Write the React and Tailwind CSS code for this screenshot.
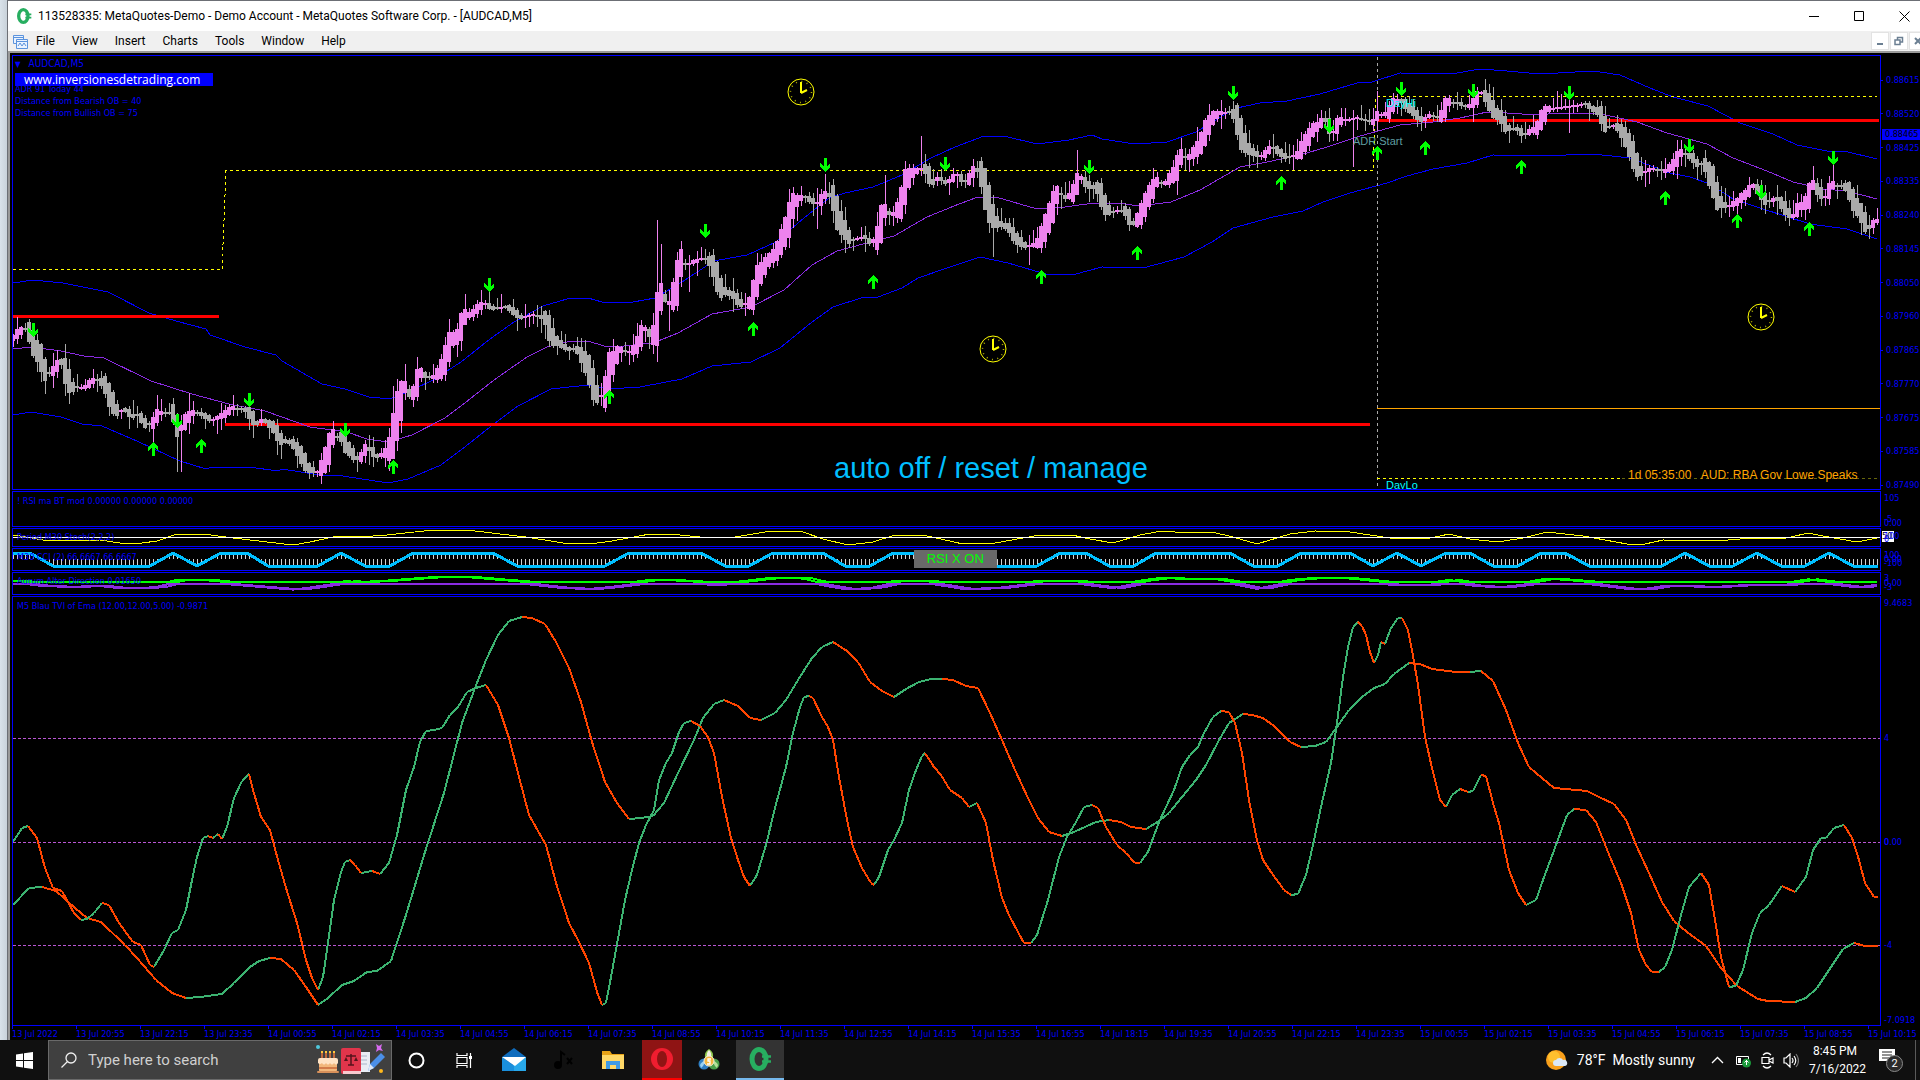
import React from "react";

// ================= PRICE CHART DATA =================
const PRICE = [
  [13, 338], [18, 333], [24, 328], [29, 332], [33, 343], [41, 358], [46, 373], [51, 373], [61, 362], [67, 375],
  [71, 387], [84, 388], [96, 379], [104, 383], [110, 397], [118, 412], [124, 409], [133, 416], [139, 415], [147, 425],
  [153, 423], [159, 413], [175, 413], [178, 433], [184, 423], [192, 413], [200, 413], [212, 420], [222, 416], [233, 408],
  [247, 410], [257, 423], [264, 420], [273, 427], [282, 440], [292, 443], [300, 453], [308, 467], [318, 472], [322, 467],
  [327, 455], [333, 437], [341, 437], [347, 447], [359, 460], [367, 447], [378, 457], [386, 452], [392, 445], [394, 427],
  [402, 397], [405, 387], [410, 394], [414, 393], [420, 373], [431, 378], [439, 373], [445, 360], [451, 340], [457, 337],
  [465, 317], [473, 313], [484, 303], [494, 308], [508, 307], [522, 318], [535, 315], [545, 318], [553, 337], [559, 343],
  [569, 349], [578, 350], [588, 367], [594, 387], [599, 398], [605, 392], [608, 375], [614, 360], [620, 350], [631, 352],
  [639, 342], [644, 328], [651, 335], [656, 335], [658, 303], [662, 295], [669, 303], [676, 290], [680, 263], [688, 264],
  [704, 258], [712, 263], [718, 280], [722, 290], [733, 295], [743, 305], [751, 302], [758, 278], [767, 262], [776, 253],
  [786, 230], [794, 203], [804, 196], [818, 204], [827, 193], [833, 198], [838, 217], [845, 230], [851, 240], [865, 237],
  [871, 243], [878, 237], [884, 210], [892, 215], [900, 207], [906, 183], [912, 173], [924, 167], [933, 182], [939, 178],
  [947, 183], [957, 175], [967, 182], [975, 168], [982, 175], [986, 193], [992, 215], [998, 223], [1008, 227], [1018, 240],
  [1027, 247], [1039, 242], [1047, 223], [1053, 207], [1058, 192], [1067, 198], [1073, 193], [1080, 177], [1090, 186],
  [1098, 188], [1106, 207], [1112, 212], [1124, 210], [1133, 223], [1139, 218], [1147, 200], [1157, 182], [1165, 183],
  [1176, 172], [1180, 157], [1190, 157], [1200, 145], [1207, 128], [1213, 118], [1220, 113], [1232, 112], [1237, 120],
  [1242, 138], [1250, 150], [1262, 157], [1272, 147], [1280, 152], [1287, 157], [1298, 155], [1305, 143], [1313, 130],
  [1325, 120], [1333, 132], [1340, 121], [1353, 119], [1358, 118], [1373, 122], [1378, 115], [1388, 114], [1393, 105],
  [1400, 100], [1408, 107], [1417, 115], [1423, 121], [1430, 115], [1440, 118], [1448, 102], [1458, 103], [1467, 107],
  [1473, 103], [1482, 92], [1488, 100], [1495, 113], [1502, 118], [1507, 128], [1517, 129], [1525, 134], [1537, 128],
  [1542, 118], [1548, 109], [1570, 107], [1585, 104], [1600, 113], [1607, 128], [1615, 125], [1623, 133], [1630, 147],
  [1637, 165], [1642, 173], [1653, 169], [1665, 171], [1673, 165], [1682, 152], [1692, 157], [1697, 163], [1705, 165],
  [1713, 182], [1718, 200], [1727, 207], [1737, 202], [1748, 192], [1754, 185], [1760, 192], [1767, 202], [1777, 199],
  [1783, 205], [1792, 217], [1798, 208], [1807, 202], [1813, 185], [1825, 197], [1833, 185], [1847, 187], [1853, 200],
  [1862, 215], [1868, 228], [1877, 221],
];

// long wicks: bar x -> [high, low]
const SPIKES = {
  177: [413, 472], 181: [415, 472], 189: [393, 434], 281: [430, 459], 393: [386, 450], 405: [364, 400], 465: [294, 325],
  657: [220, 362], 661: [244, 315], 669: [290, 331], 689: [255, 292], 817: [188, 229], 825: [174, 204], 885: [175, 226],
  921: [136, 176], 985: [170, 205], 993: [195, 257], 1029: [235, 265], 1077: [150, 190], 1353: [110, 167], 1377: [91, 130],
  1569: [96, 133], 1557: [91, 112], 1813: [166, 190], 1833: [163, 190], 1861: [205, 235], 1869: [215, 239],
};

const UPPER = [
  [13, 283], [33, 280], [63, 283], [108, 292], [149, 313], [176, 321], [206, 329], [210, 335], [245, 347], [276, 355],
  [282, 361], [322, 384], [345, 389], [369, 397], [390, 399], [412, 390], [433, 380], [461, 362], [490, 339], [514, 322],
  [543, 306], [567, 299], [588, 298], [602, 302], [633, 302], [655, 298], [682, 282], [714, 261], [747, 255], [776, 242],
  [804, 218], [829, 198], [845, 193], [873, 187], [902, 175], [931, 158], [955, 147], [984, 136], [1008, 137], [1037, 144],
  [1069, 140], [1092, 135], [1102, 139], [1135, 144], [1167, 142], [1196, 132], [1224, 115], [1237, 108], [1260, 103],
  [1287, 101], [1320, 94], [1357, 83], [1372, 82], [1400, 73], [1440, 74], [1457, 73], [1480, 69], [1507, 71], [1540, 74],
  [1593, 71], [1620, 75], [1650, 88], [1673, 97], [1708, 106], [1740, 123], [1773, 134], [1797, 145], [1827, 151],
  [1848, 152], [1877, 159],
];

const MIDDLE = [
  [13, 349], [31, 347], [61, 351], [84, 356], [104, 358], [151, 381], [192, 394], [229, 404], [265, 411], [310, 427],
  [347, 432], [367, 439], [388, 442], [412, 435], [445, 418], [461, 406], [494, 380], [527, 357], [547, 347], [571, 341],
  [588, 341], [604, 346], [624, 346], [653, 343], [678, 333], [712, 314], [751, 307], [784, 290], [812, 265], [837, 251],
  [878, 240], [894, 236], [927, 217], [959, 204], [978, 197], [996, 197], [1037, 209], [1065, 207], [1094, 203], [1118, 203],
  [1139, 206], [1171, 202], [1200, 190], [1240, 167], [1267, 162], [1300, 155], [1327, 147], [1360, 136], [1400, 125],
  [1433, 122], [1460, 118], [1487, 112], [1507, 113], [1537, 115], [1560, 113], [1597, 113], [1637, 122], [1667, 133],
  [1707, 144], [1733, 158], [1767, 171], [1793, 182], [1823, 189], [1847, 191], [1877, 199],
];

const LOWER = [
  [13, 415], [31, 412], [61, 417], [82, 424], [102, 426], [139, 442], [180, 461], [206, 469], [212, 467], [249, 467],
  [278, 471], [282, 469], [320, 475], [343, 476], [388, 483], [408, 479], [441, 465], [461, 450], [490, 427], [518, 406],
  [551, 389], [588, 385], [608, 389], [640, 387], [682, 379], [712, 366], [751, 362], [780, 348], [812, 322], [833, 307],
  [861, 298], [878, 297], [902, 288], [918, 278], [947, 268], [980, 257], [1008, 263], [1049, 275], [1076, 274], [1102, 267],
  [1143, 268], [1184, 257], [1212, 242], [1233, 228], [1273, 217], [1303, 211], [1323, 202], [1350, 193], [1387, 183],
  [1407, 176], [1433, 169], [1467, 163], [1493, 155], [1540, 156], [1593, 154], [1630, 158], [1670, 173], [1690, 177],
  [1710, 184], [1733, 199], [1763, 209], [1810, 224], [1847, 229], [1877, 239],
];

const SELLS = [
  [33, 330], [177, 421], [249, 400], [345, 430], [489, 285], [705, 231], [825, 165], [945, 164], [1089, 167],
  [1233, 93], [1329, 126], [1401, 89], [1473, 91], [1569, 93], [1689, 146], [1761, 192], [1833, 158],
];
const BUYS = [
  [153, 449], [201, 446], [393, 467], [609, 397], [753, 329], [873, 282], [1041, 277], [1137, 253], [1281, 183],
  [1377, 153], [1425, 148], [1521, 167], [1665, 198], [1737, 221], [1809, 229],
];
const CLOCKS = [[801, 92], [993, 349], [1761, 317]];

// ================= INDICATOR DATA =================
const STOCH = [
  [13, 535], [20, 536], [43, 540], [67, 541], [100, 540], [120, 543], [142, 543], [157, 541], [177, 534], [203, 534],
  [233, 538], [267, 542], [293, 545], [310, 542], [333, 537], [347, 536], [360, 537], [387, 535], [433, 530], [467, 530],
  [500, 534], [526, 537], [563, 543], [590, 544], [612, 541], [650, 534], [680, 535], [710, 538], [735, 537], [765, 532],
  [780, 531], [803, 532], [823, 539], [848, 545], [873, 542], [895, 535], [923, 535], [963, 544], [995, 543], [1040, 535],
  [1072, 535], [1090, 539], [1113, 543], [1140, 535], [1162, 531], [1188, 533], [1212, 532], [1233, 537], [1257, 544],
  [1290, 534], [1315, 531], [1350, 532], [1390, 538], [1425, 539], [1440, 536], [1449, 534], [1470, 539], [1498, 542],
  [1523, 538], [1547, 532], [1583, 536], [1627, 544], [1645, 544], [1663, 540], [1717, 541], [1740, 539], [1787, 538],
  [1808, 533], [1823, 536], [1857, 542], [1877, 538],
];

const HI = 553;
const LO = 566;
const CCI = [
  [13, HI], [30, HI], [53, LO], [150, LO], [173, HI], [197, LO], [221, HI], [247, HI], [268, LO], [318, LO], [341, HI],
  [365, LO], [390, LO], [413, HI], [493, HI], [517, LO], [605, LO], [629, HI], [701, HI], [725, LO], [749, LO],
  [773, HI], [823, HI], [845, LO], [870, LO], [893, HI], [914, HI], [938, LO], [1037, LO], [1060, HI], [1086, HI],
  [1109, LO], [1134, LO], [1156, HI], [1230, HI], [1253, LO], [1278, LO], [1301, HI], [1350, HI], [1373, LO],
  [1397, HI], [1421, LO], [1446, HI], [1470, HI], [1493, LO], [1518, LO], [1541, HI], [1565, HI], [1589, LO],
  [1662, LO], [1685, HI], [1709, LO], [1733, LO], [1757, HI], [1781, LO], [1805, LO], [1829, HI], [1853, LO], [1878, LO],
];

const FAST = [
  [13, 842], [22, 828], [28, 826], [37, 838], [45, 868], [53, 888], [62, 891], [74, 913], [81, 920], [87, 919], [94, 913],
  [102, 903], [109, 905], [119, 923], [133, 942], [141, 945], [150, 965], [154, 967], [164, 950], [172, 933], [178, 930],
  [186, 910], [192, 880], [197, 857], [203, 838], [208, 836], [213, 838], [218, 834], [222, 839], [227, 827], [234, 798],
  [242, 781], [249, 774], [253, 790], [261, 817], [270, 830], [278, 860], [286, 888], [297, 923], [306, 960], [312, 978],
  [318, 990], [323, 977], [328, 943], [334, 900], [341, 872], [345, 862], [350, 860], [355, 865], [361, 873], [372, 871],
  [380, 874], [389, 863], [397, 835], [406, 790], [414, 767], [420, 742], [426, 731], [434, 730], [442, 728], [450, 715],
  [458, 707], [467, 692], [476, 688], [486, 685], [498, 705], [509, 738], [519, 777], [529, 815], [546, 845], [556, 883],
  [569, 923], [578, 940], [589, 963], [597, 992], [602, 1005], [606, 1003], [611, 977], [619, 933], [625, 900], [632, 870],
  [639, 843], [646, 825], [654, 810], [659, 780], [666, 763], [672, 753], [679, 732], [684, 723], [691, 721], [700, 726],
  [708, 737], [714, 753], [722, 797], [731, 838], [738, 860], [744, 877], [750, 886], [757, 875], [766, 845], [775, 808],
  [786, 767], [793, 733], [800, 707], [804, 697], [809, 696], [813, 698], [822, 717], [828, 727], [833, 740], [839, 777],
  [847, 820], [853, 847], [862, 868], [871, 883], [874, 885], [879, 877], [888, 850], [894, 840], [902, 823], [909, 790],
  [916, 770], [922, 756], [925, 753], [934, 767], [941, 775], [950, 790], [962, 798], [969, 807], [977, 803], [986, 823],
  [993, 860], [1002, 898], [1009, 915], [1018, 932], [1024, 943], [1031, 943], [1037, 935], [1048, 900], [1059, 857],
  [1067, 837], [1076, 822], [1084, 807], [1092, 805], [1098, 808], [1106, 827], [1117, 845], [1126, 853], [1135, 863],
  [1140, 863], [1148, 852], [1159, 822], [1174, 790], [1182, 767], [1190, 755], [1198, 747], [1204, 733], [1213, 717],
  [1221, 711], [1229, 712], [1235, 723], [1242, 753], [1249, 800], [1257, 840], [1263, 860], [1271, 872], [1284, 890],
  [1291, 895], [1298, 894], [1306, 875], [1313, 845], [1321, 807], [1331, 763], [1337, 723], [1343, 677], [1348, 647],
  [1353, 627], [1358, 622], [1362, 626], [1366, 635], [1370, 652], [1374, 663], [1378, 655], [1381, 642], [1385, 644],
  [1391, 628], [1398, 618], [1402, 618], [1408, 630], [1412, 650], [1418, 685], [1425, 737], [1432, 768], [1440, 800],
  [1446, 807], [1452, 795], [1460, 789], [1468, 792], [1473, 791], [1481, 775], [1486, 776], [1493, 803], [1499, 823],
  [1509, 870], [1518, 893], [1526, 905], [1536, 900], [1543, 880], [1556, 845], [1567, 815], [1574, 809], [1586, 810],
  [1596, 822], [1602, 837], [1610, 857], [1621, 883], [1631, 913], [1639, 950], [1646, 965], [1652, 972], [1659, 972],
  [1665, 967], [1672, 950], [1681, 915], [1689, 887], [1701, 873], [1709, 885], [1715, 920], [1721, 957], [1729, 987],
  [1736, 986], [1743, 970], [1752, 933], [1760, 913], [1769, 905], [1782, 886], [1795, 892], [1806, 877], [1813, 850],
  [1821, 838], [1826, 838], [1834, 828], [1844, 825], [1852, 838], [1859, 860], [1865, 883], [1874, 897], [1878, 897],
];

const SLOW = [
  [13, 905], [29, 888], [42, 887], [56, 891], [75, 908], [87, 918], [101, 922], [125, 945], [137, 958], [156, 980],
  [172, 993], [186, 998], [200, 997], [222, 994], [234, 983], [250, 967], [259, 961], [270, 958], [281, 959], [294, 970],
  [306, 987], [318, 1005], [328, 998], [342, 985], [354, 981], [367, 972], [377, 971], [391, 961], [406, 915], [425, 852],
  [444, 793], [462, 723], [475, 688], [486, 660], [498, 635], [509, 621], [522, 617], [532, 618], [545, 624], [556, 642],
  [569, 668], [581, 702], [592, 742], [605, 782], [617, 803], [629, 819], [641, 818], [653, 816], [664, 803], [678, 773],
  [694, 740], [703, 718], [714, 704], [724, 700], [738, 706], [750, 718], [761, 720], [775, 713], [786, 700], [798, 680],
  [812, 658], [822, 647], [833, 642], [847, 651], [858, 662], [870, 682], [882, 691], [894, 697], [906, 689], [919, 682],
  [931, 679], [942, 679], [953, 680], [966, 686], [978, 688], [990, 713], [1002, 740], [1015, 770], [1028, 798],
  [1038, 818], [1049, 832], [1062, 836], [1074, 832], [1096, 822], [1109, 820], [1121, 822], [1131, 827], [1146, 829],
  [1159, 821], [1169, 813], [1182, 797], [1196, 780], [1206, 765], [1218, 742], [1229, 723], [1243, 714], [1252, 715],
  [1263, 718], [1274, 726], [1290, 742], [1301, 747], [1315, 746], [1326, 742], [1337, 727], [1349, 710], [1362, 697],
  [1374, 688], [1385, 684], [1394, 674], [1409, 663], [1420, 664], [1432, 669], [1456, 672], [1470, 672], [1481, 671],
  [1493, 681], [1506, 710], [1518, 743], [1529, 767], [1542, 778], [1554, 788], [1587, 791], [1599, 797], [1614, 804],
  [1626, 820], [1637, 847], [1649, 873], [1662, 902], [1674, 921], [1687, 932], [1706, 946], [1721, 968], [1737, 986],
  [1758, 999], [1768, 1001], [1795, 1002], [1806, 998], [1817, 988], [1831, 967], [1843, 949], [1854, 943], [1865, 946],
  [1878, 946],
];

const PRICES = [
  "0.88615", "0.88520", "0.88425", "0.88335", "0.88240", "0.88145", "0.88050",
  "0.87960", "0.87865", "0.87770", "0.87675", "0.87585", "0.87490",
];

// ================= HELPERS =================
const line = (pts) => pts.map(([x, y]) => `${x},${y}`).join(" ");

const valueAt = (pts, x) => {
  if (x <= pts[0][0]) return pts[0][1];
  for (let i = 1; i < pts.length; i++) {
    const [x0, y0] = pts[i - 1];
    const [x1, y1] = pts[i];
    if (x <= x1) return y0 + ((y1 - y0) * (x - x0)) / (x1 - x0);
  }
  return pts[pts.length - 1][1];
};

const noise = (n) => {
  const v = Math.sin(n * 12.9898) * 43758.5453;
  return v - Math.floor(v);
};

const BARS = Array.from({ length: 467 }, (_, i) => 13 + i * 4);

const buildCandles = () => {
  const out = { up: "", down: "" };
  BARS.forEach((x, i) => {
    const mid = valueAt(PRICE, x);
    const slope = (valueAt(PRICE, x + 4) - valueAt(PRICE, x - 4)) / 2;
    const half = Math.max(1, Math.round(Math.abs(slope) * 1.4));
    const y = Math.round(mid);
    let high = y - half - 1 - Math.round(noise(i) ** 2 * 13);
    let low = y + half + 1 + Math.round(noise(i + 500) ** 2 * 13);
    if (SPIKES[x]) [high, low] = SPIKES[x];
    const d = `M${x - 2} ${y - half}h4v${half * 2}h-4zM${x} ${high}h1v${low - high}h-1z`;
    if (slope < 0) out.up += d;
    else out.down += d;
  });
  return out;
};

// splits a curve into rising and falling strokes
const buildSlopes = (pts) => {
  const out = { up: "", down: "" };
  let dir = "up";
  for (let i = 1; i < pts.length; i++) {
    const [x0, y0] = pts[i - 1];
    const [x1, y1] = pts[i];
    if (y1 < y0) dir = "up";
    if (y1 > y0) dir = "down";
    out[dir] += `M${x0} ${y0}L${x1} ${y1}`;
  }
  return out;
};

const candles = buildCandles();
const cciTicks = BARS.map((x) => `M${x} 559h1V${Math.round(valueAt(CCI, x))}h-1z`).join("");

const aurum = (sign, lag) =>
  BARS.map((x) => {
    const v = (537 - valueAt(STOCH, x - lag)) * 0.7;
    return sign > 0 ? [x, 582 - Math.max(0, v)] : [x, 584 + Math.max(0, -v)];
  });

const timeLabels = Array.from({ length: 30 }, (_, i) => {
  if (i === 0) return "13 Jul 2022";
  const t = 20 * 60 + 55 + (i - 1) * 80;
  const day = 13 + Math.floor(t / 1440);
  const hh = String(Math.floor((t % 1440) / 60)).padStart(2, "0");
  const mm = String(t % 60).padStart(2, "0");
  return `${day} Jul ${hh}:${mm}`;
});

// ================= CHART PARTS =================
const X0 = 13;
const WIDTH = 1867;

const Panel = ({ top, height, className, axis, labels, children }) => (
  <section className={`flex ${className}`}>
    <div className="relative flex min-w-0 flex-1 overflow-hidden border border-[#0000ff]">
      <svg
        className="block w-full"
        viewBox={`${X0} ${top} ${WIDTH} ${height}`}
        preserveAspectRatio="none"
        shapeRendering="crispEdges"
        fill="none"
      >
        {children}
      </svg>
      {labels}
    </div>
    <div className="relative w-[39px] shrink-0">{axis}</div>
  </section>
);

const Pin = ({ x, y, top, height, className, children }) => (
  <span
    className={`absolute -translate-y-1/2 whitespace-pre ${className}`}
    style={{ left: `${((x - X0) / WIDTH) * 100}%`, top: `${((y - top) / height) * 100}%` }}
  >
    {children}
  </span>
);

const Slopes = ({ pts }) => {
  const s = buildSlopes(pts);
  return (
    <>
      <path d={s.up} stroke="#3cb371" strokeWidth="2" />
      <path d={s.down} stroke="#ff4500" strokeWidth="2" />
    </>
  );
};

const Arrow = ({ x, y, up }) => (
  <path
    transform={`translate(${x} ${y}) scale(1 ${up ? -1 : 1})`}
    d="M-1 -7H2V1L5 -2V2L1 7H0L-5 2V-2L-1 1Z"
    fill="#00ff00"
  />
);

const Clock = ({ x, y }) => (
  <g transform={`translate(${x} ${y})`} stroke="#ffff00" shapeRendering="auto">
    <circle r="13" />
    <circle r="10.500" strokeDasharray="1 4.500" strokeWidth="1.500" opacity="0.700" />
    <path d="M0 1V-10M0 1L6 -2" strokeWidth="2" />
  </g>
);

const PriceChart = () => (
  <Panel
    top={56}
    height={433}
    className="h-[435px]"
    labels={
      <>
        <div className="absolute top-[2px] left-[2px] flex flex-col items-start leading-3">
          <span className="text-[10px]">
            <span className="mr-2 text-[8px]">▼</span>AUDCAD,M5
          </span>
          <span className="relative z-10 mt-[2px] h-[13px] w-[198px] bg-[#0000ff] pl-[9px] font-['Open_Sans',sans-serif] text-[12px] leading-[13px] text-white">
            www.inversionesdetrading.com
          </span>
          <span className="-mt-[3px]">ADR 91  Today 44</span>
          <span>Distance from Bearish OB = 40</span>
          <span>Distance from Bullish OB = 75</span>
        </div>
        <Pin x={1386} y={103} top={56} height={433} className="font-['Liberation_Sans',sans-serif] text-[11px] text-[#00ffff]">DayHi</Pin>
        <Pin x={1353} y={141} top={56} height={433} className="font-['Liberation_Sans',sans-serif] text-[11px] text-[#5f9ea0]">ADR Start</Pin>
        <Pin x={1386} y={485} top={56} height={433} className="font-['Liberation_Sans',sans-serif] text-[11px] text-[#00ffff]">DayLo</Pin>
        <Pin x={834} y={468} top={56} height={433} className="font-['Liberation_Sans',sans-serif] text-[29px] text-[#00bfff]">auto off / reset / manage</Pin>
        <Pin x={1628} y={475} top={56} height={433} className="font-['Liberation_Sans',sans-serif] text-[12px] text-[#ffa500]">1d 05:35:00   AUD: RBA Gov Lowe Speaks</Pin>
      </>
    }
    axis={
      <>
        <ul className="flex h-[434px] flex-col justify-between pt-[21px] leading-[8px]">
          {PRICES.map((p) => (
            <li key={p} className="flex items-center gap-[3px]">
              <i className="h-px w-[2px] bg-[#0000ff]" />
              {p}
            </li>
          ))}
        </ul>
        <span className="absolute top-[74px] left-px w-[38px] bg-[#0000ff] pl-[3px] leading-[11px] text-black">0.88465</span>
      </>
    }
  >
    <polyline points={line(UPPER)} stroke="#0000ff" />
    <polyline points={line(LOWER)} stroke="#0000ff" />
    <path d="M13 316.500H219M225 424.500H1370M1377 120.500H1879" stroke="#ff0000" strokeWidth="3" />
    <path d="M13 269.500H222L226 170.500H1373L1376 96.500H1877" stroke="#ffff00" strokeDasharray="3 3" />
    <path d="M1377.500 57V489" stroke="#a9a9a9" strokeDasharray="3 3" />
    <path d="M1377 408.500H1880" stroke="#ffa500" />
    <path d="M1377 478.500H1622" stroke="#ffff00" strokeDasharray="3 3" />
    <path d="M1622 478.500H1877" stroke="#66660a" strokeDasharray="3 3" />
    <polyline points={line(MIDDLE)} stroke="#8a2be2" />
    <path d={candles.down} fill="#a9a9a9" />
    <path d={candles.up} fill="#ee82ee" />
    {SELLS.map(([x, y]) => <Arrow key={x} x={x} y={y} />)}
    {BUYS.map(([x, y]) => <Arrow key={x} x={x} y={y} up />)}
    {CLOCKS.map(([x, y]) => <Clock key={x} x={x} y={y} />)}
  </Panel>
);

const BLAU_LEVELS = [["4", 738], ["0", 842], ["0.00", 842], ["-4", 945]];

const Indicators = () => (
  <>
    <Panel
      top={492}
      height={34}
      className="h-[36px]"
      labels={<span className="absolute top-[3px] left-[4px]">! RSI ma BT mod 0.00000 0.00000 0.00000</span>}
      axis={
        <>
          <span className="absolute top-px left-[3px]">105</span>
          <span className="absolute top-[22px] left-[3px]">-5</span>
          <span className="absolute top-[26px] left-[3px] h-[9px] overflow-hidden">0.00</span>
        </>
      }
    />
    <Panel
      top={529}
      height={17}
      className="h-[19px]"
      labels={<span className="absolute top-[2px] left-[4px]">Period M30 Stoch(2,2,2)</span>}
      axis={
        <>
          <span className="absolute top-[3px] left-px w-3 bg-white leading-[11px] text-black">50</span>
          <span className="absolute top-[2px] left-[3px]">100</span>
          <span className="absolute top-[5px] left-[3px]">0</span>
        </>
      }
    >
      <polyline points={line(STOCH)} stroke="#ffff00" />
      <path d="M13 537.500H1880" stroke="#ffffff" />
    </Panel>
    <Panel
      top={549}
      height={21}
      className="h-[23px]"
      labels={
        <>
          <span className="absolute top-[2px] left-[4px]">M30 CCI (2) 66.6667 66.6667</span>
          <button className="absolute top-px left-[48.25%] h-[18px] w-[83px] bg-[#696969] font-['Liberation_Sans',sans-serif] text-[13px] leading-[18px] text-[#00ff00]">
            RSI X ON
          </button>
        </>
      }
      axis={
        <>
          <span className="absolute top-px left-[3px]">100</span>
          <span className="absolute top-[5px] left-[3px]">0.00</span>
          <span className="absolute top-[9px] left-[3px]">-100</span>
        </>
      }
    >
      <path d={cciTicks} fill="#d3d3d3" />
      <polyline points={line(CCI)} stroke="#00bfff" strokeWidth="3" />
    </Panel>
    <Panel
      top={573}
      height={21}
      className="h-[23px]"
      labels={<span className="absolute top-[2px] left-[4px]">Aurum Alter Direction 0.01650</span>}
      axis={
        <>
          <span className="absolute top-0 left-[3px]">3</span>
          <span className="absolute top-[5px] left-[3px]">0.00</span>
          <span className="absolute top-[9px] left-[3px]">-3</span>
        </>
      }
    >
      <polyline points={line(aurum(-1, 0))} stroke="#8a2be2" strokeWidth="2" />
      <polyline points={line(aurum(-1, 10))} stroke="#8a2be2" strokeWidth="2" />
      <polyline points={line(aurum(1, 0))} stroke="#00ff00" strokeWidth="2" />
      <polyline points={line(aurum(1, 10))} stroke="#00ff00" strokeWidth="2" />
    </Panel>
    <Panel
      top={597}
      height={428}
      className="min-h-[430px] flex-1"
      labels={<span className="absolute top-[3px] left-[4px]">M5 Blau TVI of Ema (12.00,12.00,5.00) -0.9871</span>}
      axis={
        <>
          <div className="flex h-full flex-col justify-between pt-px pl-[3px] leading-3">
            <span>9.4683</span>
            <span>-7.0918</span>
          </div>
          {BLAU_LEVELS.map(([text, y]) => (
            <span
              key={text}
              className="absolute left-[3px] -translate-y-1/2"
              style={{ top: `${((y - 596) / 430) * 100}%` }}
            >
              {text}
            </span>
          ))}
        </>
      }
    >
      <path d="M13 738.500H1880M13 842.500H1880M13 945.500H1880" stroke="#ba55d3" strokeDasharray="3 2" />
      <Slopes pts={SLOW} />
      <Slopes pts={FAST} />
    </Panel>
  </>
);

// ================= WINDOW CHROME =================
const TerminalLogo = ({ className }) => (
  <svg className={className} viewBox="0 0 24 24" fill="none">
    <ellipse cx="11" cy="12" rx="7" ry="9.500" stroke="#27ae60" strokeWidth="5" />
    <path d="M14 9.500h9M14 14.500h9" stroke="#27ae60" strokeWidth="2.500" />
  </svg>
);

const TitleBar = () => (
  <header className="flex h-[30px] items-center bg-white text-black">
    <TerminalLogo className="ml-2 size-4" />
    <h1 className="ml-[6px] flex-1 text-[12px]">
      113528335: MetaQuotes-Demo - Demo Account - MetaQuotes Software Corp. - [AUDCAD,M5]
    </h1>
    <div className="flex w-[129px] shrink-0 items-center gap-[34px] pl-[18px]">
      <button aria-label="Minimize">
        <svg className="size-[11px]" viewBox="0 0 11 11"><path d="M0 5.500h10" stroke="#000" /></svg>
      </button>
      <button aria-label="Maximize">
        <svg className="size-[11px]" viewBox="0 0 11 11"><path d="M.5.500h9v9h-9z" fill="none" stroke="#000" /></svg>
      </button>
      <button aria-label="Close">
        <svg className="size-[11px]" viewBox="0 0 11 11"><path d="M.5.500l10 10M10.500.500l-10 10" stroke="#000" /></svg>
      </button>
    </div>
  </header>
);

const MenuBar = () => (
  <nav className="flex h-[20px] items-center overflow-hidden bg-[#f0f0f0] text-[12px] text-black">
    <svg className="mr-2 ml-[5px] size-[15px] shrink-0" viewBox="0 0 15 15" fill="#eaf3ff" stroke="#5b93dd">
      <path d="M.5 1.500h10v8h-10zM.5 3.500h10" />
      <path d="M3.500 5.500h11v9h-11zM3.500 7.500h11" />
      <path d="M5 12l2-3 2 3 2-3 2 3" fill="none" />
    </svg>
    <div className="flex flex-1 gap-[17px]">
      {["File", "View", "Insert", "Charts", "Tools", "Window", "Help"].map((m) => (
        <button key={m}>{m}</button>
      ))}
    </div>
    <div className="flex w-[49px] shrink-0 gap-px overflow-hidden">
      <button aria-label="Minimize chart" className="grid h-[18px] w-[18px] shrink-0 place-items-center border border-[#e3e3e3] bg-white">
        <svg className="size-[10px]" viewBox="0 0 10 10"><path d="M2 8h6" stroke="#6b7f92" strokeWidth="2" /></svg>
      </button>
      <button aria-label="Restore chart" className="grid h-[18px] w-[18px] shrink-0 place-items-center border border-[#e3e3e3] bg-white">
        <svg className="size-[10px]" viewBox="0 0 10 10" fill="none" stroke="#6b7f92" strokeWidth="1.500">
          <path d="M1 4h5v4.500H1zM3.500 4V1.500h5V6H6" />
        </svg>
      </button>
      <button aria-label="Close chart" className="grid h-[18px] w-[18px] shrink-0 place-items-center border border-[#e3e3e3] bg-white">
        <svg className="size-[10px]" viewBox="0 0 10 10"><path d="M2 2l6 6M8 2l-6 6" stroke="#6b7f92" strokeWidth="2" /></svg>
      </button>
    </div>
  </nav>
);

// ================= TASKBAR =================
const SearchArt = () => (
  <svg className="h-[36px] w-[70px]" viewBox="0 0 70 36">
    <circle cx="3" cy="5" r="2" fill="#4fc8dc" />
    <path d="M7 11v5M11 11v5M15 11v5M19 11v5" stroke="#e8763a" strokeWidth="1.500" />
    <path d="M7 9v2M11 9v2M15 9v2M19 9v2" stroke="#ffc83d" strokeWidth="2" />
    <rect x="4" y="17" width="18" height="13" rx="2" fill="#f2b77b" />
    <path d="M3 18q0-2 2-2h16q2 0 2 2v3q-2 3-4 0-2 3-4 0-2 3-4 0-2 3-4 0-2 2-4 0z" fill="#ffe3c4" />
    <path d="M4 26h18" stroke="#c9683a" strokeWidth="1.500" />
    <rect x="2" y="29" width="22" height="2" rx="1" fill="#d8905a" />
    <rect x="44" y="10" width="11" height="20" fill="#e9edf5" />
    <path d="M46 14h6M46 18h6M46 22h6" stroke="#a9b4c9" />
    <rect x="26" y="6" width="20" height="26" rx="2" fill="#e0354b" />
    <path d="M28 29h18v3H28z" fill="#f7c9cf" />
    <path d="M36 12v11M31 14h10M33 23h6" stroke="#56131c" strokeWidth="1.500" />
    <path d="M29 19h4l-2-4zM39 19h4l-2-4z" fill="#56131c" />
    <path d="M53 29l2-7L66 11l4 4L59 26z" fill="#4b8fe8" />
    <path d="M53 29l2-7 4 4z" fill="#dfe9f8" />
    <path d="M61 2l3 2 3-2-1 4 2 3-4-1-3 2 1-4z" fill="#d76bf0" />
    <circle cx="66" cy="29" r="2" fill="#ffb81c" />
  </svg>
);

const TaskButton = ({ label, className, children }) => (
  <button aria-label={label} className={`grid h-10 shrink-0 place-items-center ${className}`}>{children}</button>
);

const Taskbar = () => (
  <footer className="flex h-10 items-center bg-[#101010] text-white">
    <TaskButton label="Start" className="w-12">
      <svg className="size-[17px]" viewBox="0 0 17 17" fill="#fff">
        <path d="M0 2.500l7-1V8H0zM8 1.300L17 0v8H8zM0 9h7v6.500l-7-1zM8 9h9v8l-9-1.300z" />
      </svg>
    </TaskButton>
    <label className="flex h-10 w-[344px] shrink-0 items-center border border-[#6a6a6a] bg-[#404040] pl-3">
      <svg className="mr-[11px] size-4" viewBox="0 0 16 16" fill="none" stroke="#f0f0f0" strokeWidth="1.300">
        <circle cx="10" cy="6" r="5" />
        <path d="M6.500 9.500L.5 15.500" />
      </svg>
      <input
        className="w-[178px] bg-transparent text-[15px] placeholder:text-[#d0d0d0] focus:outline-none"
        placeholder="Type here to search"
        aria-label="Search"
      />
      <span className="mr-[6px] ml-auto"><SearchArt /></span>
    </label>
    <TaskButton label="Cortana" className="w-12">
      <svg className="size-[17px]" viewBox="0 0 17 17"><circle cx="8.500" cy="8.500" r="7" fill="none" stroke="#fff" strokeWidth="2" /></svg>
    </TaskButton>
    <TaskButton label="Task view" className="w-12">
      <svg className="size-[17px]" viewBox="0 0 17 17" fill="none" stroke="#fff" strokeWidth="1.200">
        <path d="M1 1v2.500h10V1M1 16v-2.500h10V16M1 5.500h10v6H1zM14.500 1v15" />
        <path d="M13 4h3v3h-3z" fill="#fff" stroke="none" />
      </svg>
    </TaskButton>
    <TaskButton label="Mail" className="w-[52px]">
      <svg className="size-[24px]" viewBox="0 0 24 24">
        <path d="M0 9L12 0l12 9v14H0z" fill="#0f6cbd" />
        <path d="M24 9v14H0z" fill="#28a8ea" />
        <path d="M0 9l12 9v5H0z" fill="#1a8fdc" />
        <path d="M0 9h24l-11 9z" fill="#fff" />
      </svg>
    </TaskButton>
    <TaskButton label="Music" className="w-12">
      <svg className="size-[20px]" viewBox="0 0 20 20" fill="none" stroke="#000" strokeWidth="2">
        <circle cx="4" cy="15" r="3" fill="#000" />
        <path d="M7 15V2l4 3M13 8l5 6M18 8l-5 6" />
      </svg>
    </TaskButton>
    <TaskButton label="File Explorer" className="w-[50px]">
      <svg className="h-[20px] w-[22px]" viewBox="0 0 22 20">
        <path d="M0 1h8l2 3h12v15H0z" fill="#e8a317" />
        <path d="M0 5h22v14H0z" fill="#ffd867" />
        <path d="M4 19v-8h14v8h-4v-4H8v4z" fill="#3f9be6" />
      </svg>
    </TaskButton>
    <TaskButton label="Opera" className="ml-1 w-[40px] border-b-2 border-[#ff0000] bg-[#8f1414]">
      <svg className="size-[24px]" viewBox="0 0 24 24">
        <circle cx="12" cy="12" r="11" fill="#f01d2f" />
        <ellipse cx="12" cy="12" rx="5" ry="8" fill="#8f1414" />
      </svg>
    </TaskButton>
    <TaskButton label="MetaTrader" className="w-[54px]">
      <svg className="h-[22px] w-[22px]" viewBox="0 0 22 22">
        <path d="M11 0q5 3 4 9l-8 0q-1-6 4-9z" fill="#8cc84b" />
        <path d="M11 1q3 3 2 7h-4q-1-4 2-7z" fill="#f2efe2" />
        <circle cx="6" cy="15" r="5.500" fill="#2f7fc4" />
        <path d="M2 16q2-4 5-4-1 5-4 7z" fill="#9ad0f0" />
        <circle cx="16" cy="15" r="5.500" fill="#4aa04a" />
        <path d="M20 16q-2-4-5-4 1 5 4 7z" fill="#b5e09a" />
        <circle cx="11" cy="12" r="5" fill="#f3b53c" stroke="#f6efe0" />
        <path d="M13 10h-3v2h2v3H9" fill="none" stroke="#fff" strokeWidth="1.300" />
      </svg>
    </TaskButton>
    <TaskButton label="Terminal" className="w-12 border-b-2 border-[#76b9ed] bg-[#333333]">
      <TerminalLogo className="size-6" />
    </TaskButton>
    <div className="ml-auto flex items-center">
      <svg className="size-[22px]" viewBox="0 0 22 22">
        <circle cx="10" cy="11" r="10" fill="#f9a01b" />
        <circle cx="8" cy="8" r="6" fill="#ffc02e" />
        <path d="M10 17a3 3 0 010-6 4 4 0 017 0 3 3 0 012 6z" fill="#dbe8f7" />
      </svg>
      <span className="mr-4 ml-[9px] text-[14px] whitespace-pre">78°F  Mostly sunny</span>
      <svg className="mr-[11px] h-[8px] w-[13px]" viewBox="0 0 13 8"><path d="M1 7l5.500-5.500L12 7" fill="none" stroke="#fff" strokeWidth="1.300" /></svg>
      <svg className="mr-[10px] h-[16px] w-[16px]" viewBox="0 0 16 16">
        <path d="M1.500 4.500h12v8h-12z" fill="none" stroke="#fff" />
        <path d="M3 6h3v5H3z" fill="#fff" />
        <circle cx="11.500" cy="11" r="4.500" fill="#1a9a3a" />
        <path d="M11.500 8v5M9.500 10.500l2-2 2 2" fill="none" stroke="#fff" />
      </svg>
      <svg className="mr-[9px] h-[17px] w-[13px]" viewBox="0 0 13 17" fill="none" stroke="#fff" strokeWidth="1.200">
        <path d="M2 3q4-4 8 0M2 14q4 4 8 0M1 5.500h7v6H1zM8 8l4-2v5l-4-2" />
      </svg>
      <svg className="mr-[10px] h-[15px] w-[16px]" viewBox="0 0 16 15" fill="none" stroke="#fff" strokeWidth="1.200">
        <path d="M1 5h2l4-4v13l-4-4H1zM9 5q2 2.500 0 5M11 3q3.500 4.500 0 9" />
        <path d="M13 1q5 6.500 0 13" stroke="#777" />
      </svg>
      <div className="w-[52px] text-center text-[12px] leading-[18px]">
        <div>8:45 PM</div>
        <div>7/16/2022</div>
      </div>
      <div className="relative ml-[18px] h-6 w-[24px]">
        <svg className="h-[18px] w-[17px]" viewBox="0 0 17 18">
          <path d="M0 1h16v12h-4v4l-4-4H0z" fill="#fff" />
          <path d="M3 4h10M3 7h10M3 10h7" stroke="#222" />
        </svg>
        <span className="absolute top-[7px] left-[7px] grid size-[17px] place-items-center rounded-full border border-[#8a8a8a] bg-[#2b2b2b] text-[11px] leading-none">2</span>
      </div>
      <i className="mr-1 ml-3 h-10 w-px bg-[#5a5a5a]" />
    </div>
  </footer>
);

const App = () => (
  <div className="flex min-h-screen w-full flex-col overflow-hidden bg-black font-['Roboto',sans-serif]">
    <div className="flex flex-1 bg-gradient-to-r from-[#d9e2ea] to-[#c9d2da] bg-[length:7px_100%] bg-no-repeat pl-[7px]">
      <main className="flex min-w-0 flex-1 flex-col border-t border-l border-[#6c6f75]">
        <TitleBar />
        <MenuBar />
        <div className="flex flex-1 flex-col border-t-2 border-l-2 border-[#9a9a9a] bg-black">
          <div className="flex flex-1 flex-col gap-px pt-[2px] pl-[2px] font-['DejaVu_Sans_Condensed',sans-serif] text-[9px] leading-[12px] text-[#0000ff]">
            <PriceChart />
            <Indicators />
          </div>
          <ol className="flex h-[14px] overflow-hidden pl-[2px] font-['DejaVu_Sans_Condensed',sans-serif] text-[9px] text-[#0000ff]">
            {timeLabels.map((t, i) => (
              <li key={i} className="min-w-0 flex-[64_1_0%] leading-[10px] whitespace-nowrap last:flex-[52_1_0%]">
                <i className="block h-[3px] w-px bg-[#0000ff]" />
                {t}
              </li>
            ))}
          </ol>
        </div>
      </main>
    </div>
    <Taskbar />
  </div>
);

export default App;
